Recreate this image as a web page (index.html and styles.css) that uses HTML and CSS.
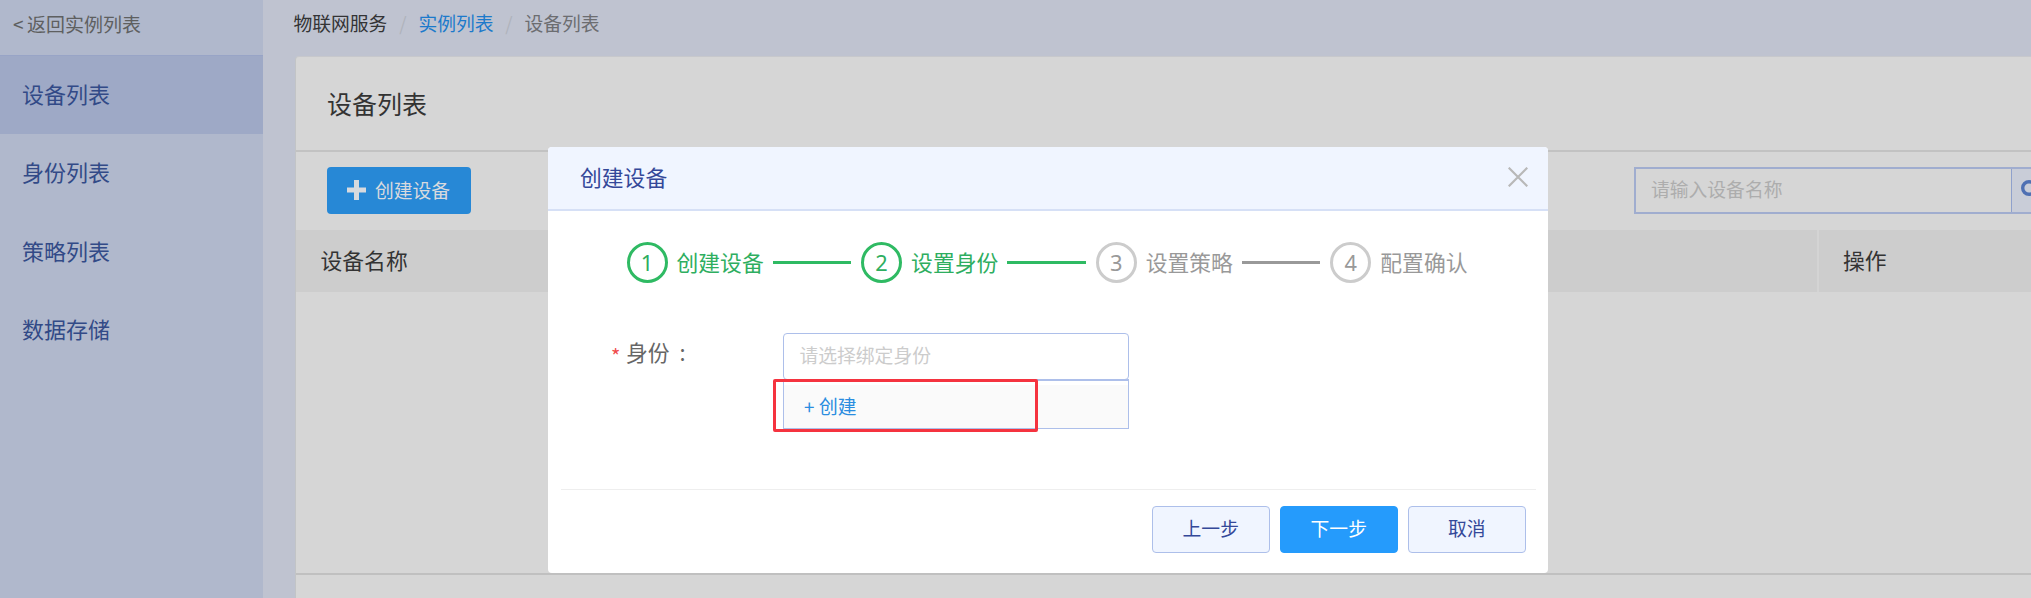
FILE: index.html
```html
<!DOCTYPE html>
<html lang="zh-CN">
<head>
<meta charset="utf-8">
<title>设备列表</title>
<link rel="stylesheet" href="styles.css">
</head>
<body>
<div class="app">
  <nav class="sidebar">
    <a class="back"><span class="lt">&lt;</span>返回实例列表</a>
    <a class="nav-item active">设备列表</a>
    <a class="nav-item">身份列表</a>
    <a class="nav-item">策略列表</a>
    <a class="nav-item">数据存储</a>
  </nav>
  <main class="main">
    <div class="breadcrumb">
      <span class="crumb-root">物联网服务</span><span class="sep">/</span><span class="crumb-link">实例列表</span><span class="sep">/</span><span class="crumb-current">设备列表</span>
    </div>
    <section class="card">
      <h1 class="card-title">设备列表</h1>
      <div class="toolbar">
        <button class="create-btn"><svg width="20" height="20" viewBox="0 0 20 20"><path d="M0 10H19M9.5 0V20" stroke="#d8dade" stroke-width="5"/></svg><span>创建设备</span></button>
        <div class="search">
          <div class="search-input">请输入设备名称</div>
          <div class="search-btn"><svg width="22" height="22" viewBox="0 0 22 22"><circle cx="8" cy="8" r="6.3" fill="none" stroke="#4f70b3" stroke-width="3.4"/><path d="M13 13l7 7" stroke="#4f70b3" stroke-width="3.6"/></svg></div>
        </div>
      </div>
      <div class="thead"><span class="th th-name">设备名称</span><span class="th th-action">操作</span></div>
      <div class="tbody"></div>
    </section>
  </main>
</div>

<div class="modal">
  <header class="modal-head">
    <span>创建设备</span>
    <svg width="20" height="20" viewBox="0 0 20 20"><path d="M.7.7l18.6 18.6M19.3.7L.7 19.3" stroke="#b8b8b8" stroke-width="2.2"/></svg>
  </header>
  <div class="steps">
    <div class="step done"><i class="num">1</i><span class="label">创建设备</span><i class="line"></i></div>
    <div class="step done"><i class="num">2</i><span class="label">设置身份</span><i class="line"></i></div>
    <div class="step"><i class="num">3</i><span class="label">设置策略</span><i class="line"></i></div>
    <div class="step"><i class="num">4</i><span class="label">配置确认</span></div>
  </div>
  <div class="form-row">
    <div class="form-label"><span class="required">*</span><span>身份</span><span class="colon">:</span></div>
    <div class="select">
      <div class="select-input">请选择绑定身份</div>
      <div class="dropdown"><div class="option"><span class="plus">+</span>创建</div></div>
      <div class="highlight"></div>
    </div>
  </div>
  <footer class="modal-foot">
    <button class="btn">上一步</button>
    <button class="btn primary">下一步</button>
    <button class="btn">取消</button>
  </footer>
</div>
</body>
</html>
```

FILE: styles.css
```css
* { box-sizing: border-box; }

body {
  margin: 0;
  width: 2031px;
  height: 598px;
  overflow: hidden;
  font-family: "Noto Sans CJK SC", sans-serif;
  font-size: 18.8px;
  line-height: 1;
  background: #bfc3d0;
}

button { font: inherit; border: 0; padding: 0; }
i { font-style: normal; }
svg { display: block; flex: none; }

.app { display: flex; height: 598px; }

.sidebar {
  flex: none;
  width: 263px;
  background: #b0b8cc;
}

.back {
  display: flex;
  align-items: center;
  height: 56px;
  padding: 0 0 8px 13px;
  border-bottom: 1px solid #98a4c6;
  font-size: 19px;
  color: #5e5f60;
}

.lt { width: 14px; }

.nav-item {
  display: flex;
  align-items: center;
  height: 78.3px;
  padding: 0 0 4px 22px;
  font-size: 22px;
  color: #324a87;
}

.active { background: #9ea9c6; }

.main {
  flex: 1;
  min-width: 0;
  display: flex;
  flex-direction: column;
  padding-left: 32px;
}

.breadcrumb {
  display: flex;
  align-items: center;
  height: 56px;
  margin-left: -1.5px;
  padding-bottom: 9px;
}

.crumb-root { color: #333335; }
.crumb-link { color: #1c7acb; }
.crumb-current { color: #6c6d70; }
.sep { width: 31px; text-align: center; color: #b0b3bc; }

.card {
  flex: 1;
  background: #d6d6d6;
  border-left: 1px solid #c2c4c6;
  border-top: 1px solid #c7c8cc;
  border-top-left-radius: 4px;
}

.card-title {
  display: flex;
  align-items: center;
  height: 95px;
  margin: 0;
  padding-left: 31px;
  border-bottom: 2px solid #c2c2c2;
  font-size: 25px;
  font-weight: 400;
  color: #333;
}

.toolbar {
  display: flex;
  justify-content: space-between;
  height: 78px;
  padding: 15px 0 16px 30.5px;
}

.create-btn {
  display: flex;
  align-items: center;
  gap: 8.5px;
  width: 144px;
  height: 47px;
  padding: 0 0 1px 20px;
  border-radius: 4px;
  background: #2788d6;
  color: #d8dade;
}

.search { display: flex; height: 47px; width: 397px; border: 2px solid #a0adcf; border-right: 0; }

.search-input {
  display: flex;
  align-items: center;
  width: 375px;
  padding: 0 0 2px 15px;
  color: #adadad;
}

.search-btn {
  display: flex;
  align-items: center;
  flex: 1;
  overflow: hidden;
  padding-left: 9px;
  border-left: 1px solid #8fa1cc;
  background: #c9cdd8;
}

.thead {
  display: flex;
  height: 62px;
  background: #cdcdcd;
  font-size: 21.8px;
  color: #333;
}

.th { display: flex; align-items: center; padding-bottom: 3px; }
.th-name { width: 1523px; padding-left: 24.5px; border-right: 2px solid #d4d4d4; }
.th-action { padding-left: 24px; }
.tbody { height: 283px; border-bottom: 2px solid #c0c0c0; }

.modal {
  position: absolute;
  left: 548px;
  top: 147px;
  width: 1000px;
  height: 426px;
  border-radius: 4px;
  background: #fff;
  overflow: hidden;
}

.modal-head {
  display: flex;
  justify-content: space-between;
  align-items: center;
  height: 64px;
  padding: 0 20px 2px 32px;
  border-bottom: 2px solid #d6e0f6;
  background: #f0f5ff;
  font-size: 21.8px;
  color: #344899;
}

.modal-head svg { margin-top: -1px; }

.steps { display: flex; padding: 31px 0 0 78.5px; }

.step {
  display: flex;
  align-items: center;
  width: 234.6px;
  flex: none;
  color: #999;
}

.num {
  display: flex;
  justify-content: center;
  align-items: center;
  width: 41px;
  height: 41px;
  border: 3px solid #ccc;
  border-radius: 50%;
  font-family: "Noto Sans", sans-serif;
  font-size: 21.8px;
}

.label { margin: 0 9px; padding-bottom: 2px; font-size: 21.8px; }
.line { width: 78.5px; height: 3px; background: #999; }
.done { color: #2eae60; }
.done .num { border-color: #2fba63; }
.done .line { background: #2fba63; }

.form-row { display: flex; padding: 50px 0 0 63px; }

.form-label {
  display: flex;
  align-items: center;
  width: 172px;
  height: 38px;
  font-size: 21.8px;
  color: #666;
}

.required { width: 15px; padding-top: 7px; font-size: 20px; color: #f04b4b; }
.colon { margin-left: 10px; }

.select { position: relative; width: 346px; font-size: 18.8px; }

.select-input {
  display: flex;
  align-items: center;
  height: 47px;
  padding: 0 0 3px 15.5px;
  border: 1px solid #adbfea;
  border-radius: 4px;
  color: #ccc;
}

.dropdown {
  height: 50px;
  margin-top: -1px;
  padding-top: 4px;
  border: 1px solid #adbfea;
  border-top-width: 2px;
}

.option {
  display: flex;
  align-items: center;
  height: 43px;
  padding-left: 20px;
  background: #fafafa;
  color: #2b8de0;
}

.plus { width: 15px; }

.highlight {
  position: absolute;
  left: -10px;
  top: 46px;
  width: 265px;
  height: 53px;
  border: 3px solid #f5333f;
  border-radius: 2px;
}

.modal-foot {
  display: flex;
  justify-content: flex-end;
  gap: 9.5px;
  margin: 60px 12px 0 13px;
  padding: 16px 10px 0 0;
  border-top: 1px solid #eee;
}

.btn {
  width: 118.5px;
  height: 47px;
  padding-bottom: 3px;
  border: 1px solid #adbfea;
  border-radius: 4px;
  background: #f0f5ff;
  color: #344899;
}

.primary { border-color: #259bfc; background: #259bfc; color: #fff; }
```
